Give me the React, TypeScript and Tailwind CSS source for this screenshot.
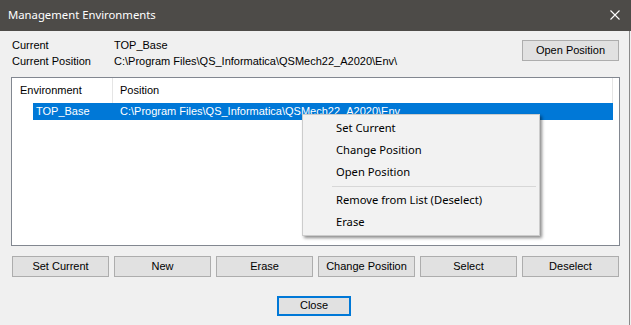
const ROW_BUTTONS = ['Set Current', 'New', 'Erase', 'Change Position', 'Select', 'Deselect'];
const MENU_TOP = ['Set Current', 'Change Position', 'Open Position'];
const MENU_BOTTOM = ['Remove from List (Deselect)', 'Erase'];

const PATH = 'C:\\Program Files\\QS_Informatica\\QSMech22_A2020\\Env\\';

function WinButton({ label, className = '' }: { label: string; className?: string }) {
  return (
    <button
      type="button"
      className={`h-[21px] w-[97px] border border-[#adadad] bg-[#e1e1e1] text-[11px] leading-none text-black ${className}`}
    >
      {label}
    </button>
  );
}

function ContextMenu() {
  return (
    <div
      className="absolute left-[290px] top-[36px] w-[238px] border border-[#cccccc] bg-[#f2f2f2] pt-[2px] pb-[2px] shadow-[2px_2px_3px_rgba(0,0,0,0.45)]"
      style={{ fontFamily: '"Noto Sans", "Open Sans", sans-serif' }}
    >
      {MENU_TOP.map(item => (
        <div key={item} className="flex h-[22px] items-center pl-[33px] text-[11.2px] text-black">{item}</div>
      ))}
      <div className="ml-[29px] mr-[3px] mt-[3px] mb-[2px] h-px bg-[#d7d7d7]" />
      {MENU_BOTTOM.map(item => (
        <div key={item} className="flex h-[22px] items-center pl-[33px] text-[11.2px] text-black">{item}</div>
      ))}
    </div>
  );
}

export default function App() {
  return (
    <div className="flex h-[325px] w-[631px] flex-col overflow-hidden bg-[#f0f0f0]" style={{ fontFamily: '"Liberation Sans", Arial, sans-serif' }}>
      {/* title bar */}
      <div className="flex h-[31px] shrink-0 items-center justify-between bg-[#4d4b48] pl-[8px] pr-[11px]">
        <span className="text-[11.3px] text-white" style={{ fontFamily: '"Noto Sans", "Open Sans", sans-serif' }}>
          Management Environments
        </span>
        <svg width="10" height="10" viewBox="0 0 10 10" className="mt-[-2px]">
          <path d="M0.5 0.5 L9.5 9.5 M9.5 0.5 L0.5 9.5" stroke="#ffffff" strokeWidth="1.1" fill="none" />
        </svg>
      </div>

      <div className="flex w-[630px] flex-1 flex-col border-r border-[#8a8a8a] pl-[11px] pr-[10px]">
        {/* current environment info */}
        <div className="mt-[6px] flex justify-between pl-px">
          <div className="grid grid-cols-[102px_auto] text-[11px] leading-[16px] text-black">
            <span>Current</span>
            <span>TOP_Base</span>
            <span>Current Position</span>
            <span>{PATH}</span>
          </div>
          <WinButton label="Open Position" className="mt-[3px]" />
        </div>

        {/* environment list */}
        <div className="relative mt-[8px] h-[169px] w-[609px] border border-[#828790] bg-white text-[11px] text-black">
          <div className="flex h-[25px] w-[601px] items-center">
            <div className="flex h-full w-[101px] items-center border-r border-[#e5e5e5] pl-[8px]">Environment</div>
            <div className="pl-[7px]">Position</div>
            <div className="ml-auto h-full border-r border-[#e5e5e5]" />
          </div>
          <div className="ml-[21px] flex h-[17px] w-[580px] items-center bg-[#0078d7] text-white">
            <span className="w-[87px] pl-[3px]">TOP_Base</span>
            <span>{PATH.slice(0, -1)}</span>
          </div>
          <ContextMenu />
        </div>

        {/* action buttons */}
        <div className="mt-[10px] flex gap-[5px] pl-px">
          {ROW_BUTTONS.map(b => (
            <WinButton key={b} label={b} />
          ))}
        </div>

        <div className="mt-[15px] pl-[266px]">
          <button
            type="button"
            className="h-[20px] w-[74px] border-2 border-[#0078d7] bg-[#e1e1e1] text-[11px] leading-none text-black"
          >
            Close
          </button>
        </div>
      </div>
    </div>
  );
}
